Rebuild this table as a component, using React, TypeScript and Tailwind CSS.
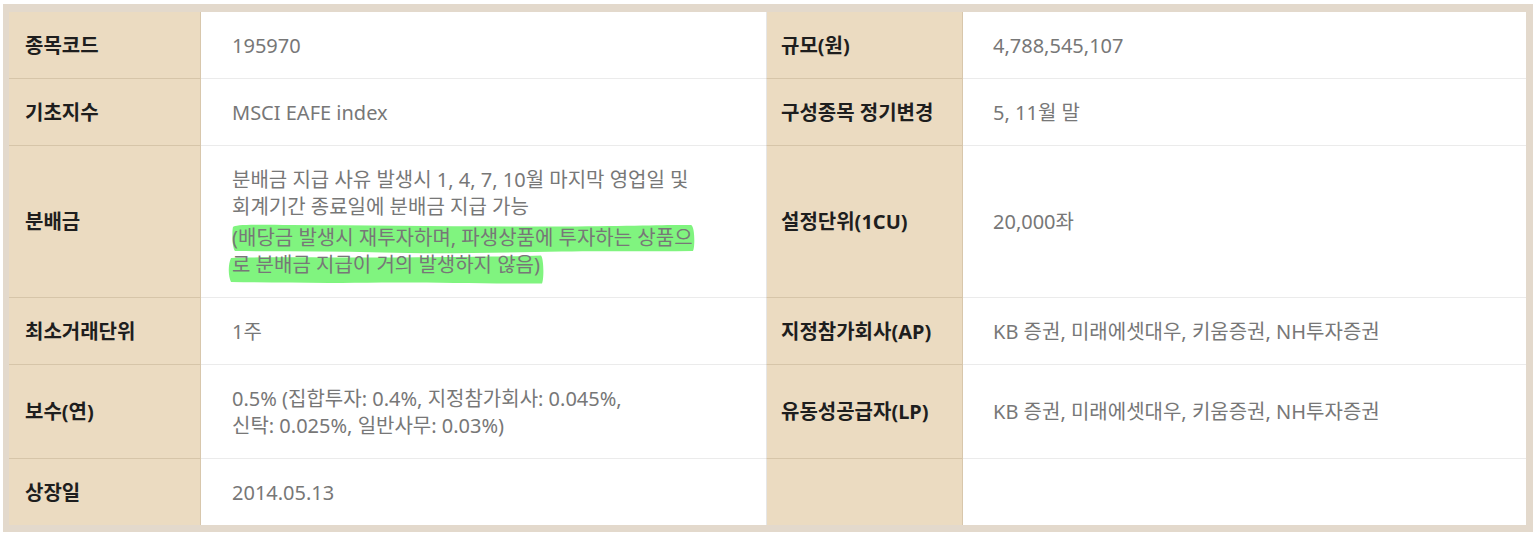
import React from "react";

const FONT = "font-['Noto_Sans','Noto_Sans_CJK_KR',sans-serif]";

function Label({ children, first, left }: { children?: React.ReactNode; first?: boolean; left?: boolean }) {
  return (
    <div
      className={`flex items-center bg-[#ebdbc1] border-r border-r-[#d8c7ac] text-[20px] leading-[27px] font-bold text-[#1e1e1e] ${
        first ? "" : "border-t border-t-[#d6c5a9]"
      } ${left ? "pl-4" : "pl-[14px] border-l border-l-[#e6e6e6]"}`}
    >
      {children}
    </div>
  );
}

function Value({ children, first, left }: { children?: React.ReactNode; first?: boolean; left?: boolean }) {
  return (
    <div
      className={`flex items-center bg-white text-[20px] leading-[27px] text-[#777777] py-[19.5px] ${
        first ? "" : "border-t border-t-[#ebebeb]"
      } ${left ? "pl-[31px]" : "pl-[30px]"}`}
    >
      <div>{children}</div>
    </div>
  );
}

function Row({
  l1,
  v1,
  l2,
  v2,
  first,
}: {
  l1: React.ReactNode;
  v1: React.ReactNode;
  l2?: React.ReactNode;
  v2?: React.ReactNode;
  first?: boolean;
}) {
  return (
    <>
      <Label first={first} left>
        {l1}
      </Label>
      <Value first={first} left>
        {v1}
      </Value>
      <Label first={first}>{l2}</Label>
      <Value first={first}>{v2}</Value>
    </>
  );
}

function Highlighted() {
  return (
    <div className="relative mt-[4px]">
      <svg
        className="absolute left-0 top-0 overflow-visible pointer-events-none"
        width="470"
        height="60"
        viewBox="0 0 470 60"
      >
        <path
          d="M1 3 C 3 0.5, 20 0.5, 60 1 C 140 1.5, 230 2.5, 320 2.5 C 400 2, 440 0.5, 459 1 C 463 2, 463 24, 461 27 C 420 28, 380 26.5, 330 27.5 C 260 29, 200 30, 150 28.5 C 100 27, 50 27.5, 3 27 C 0 24, 0 6, 1 3 Z"
          fill="#80f47f"
        />
        <path
          d="M-1 34 C 40 32.5, 100 34, 170 33.5 C 230 33, 280 32.5, 309 31.5 C 312 35, 312 56, 310 59.5 C 260 60, 200 58, 150 58.5 C 90 59.5, 40 58.5, -1 58 C -4 52, -4 40, -1 34 Z"
          fill="#80f47f"
        />
      </svg>
      <div className="relative">
        (배당금 발생시 재투자하며, 파생상품에 투자하는 상품으
        <br />로 분배금 지급이 거의 발생하지 않음)
      </div>
    </div>
  );
}

export default function App() {
  return (
    <div className={`bg-white w-[1538px] h-[545px] pt-[4px] pl-[3px] ${FONT}`}>
      <div className="w-[1530px] border-t-[8px] border-l-[6px] border-r-[7px] border-b-[7px] border-[#e3d9cc]">
        <div className="grid grid-cols-[192px_565px_197px_563px]">
          <Row first l1="종목코드" v1="195970" l2="규모(원)" v2="4,788,545,107" />
          <Row l1="기초지수" v1="MSCI EAFE index" l2="구성종목 정기변경" v2="5, 11월 말" />
          <Row
            l1="분배금"
            v1={
              <>
                <div>
                  분배금 지급 사유 발생시 1, 4, 7, 10월 마지막 영업일 및
                  <br />
                  회계기간 종료일에 분배금 지급 가능
                </div>
                <Highlighted />
              </>
            }
            l2="설정단위(1CU)"
            v2="20,000좌"
          />
          <Row l1="최소거래단위" v1="1주" l2="지정참가회사(AP)" v2="KB 증권, 미래에셋대우, 키움증권, NH투자증권" />
          <Row
            l1="보수(연)"
            v1={
              <>
                0.5% (집합투자: 0.4%, 지정참가회사: 0.045%,
                <br />
                신탁: 0.025%, 일반사무: 0.03%)
              </>
            }
            l2="유동성공급자(LP)"
            v2="KB 증권, 미래에셋대우, 키움증권, NH투자증권"
          />
          <Row l1="상장일" v1="2014.05.13" />
        </div>
      </div>
    </div>
  );
}
